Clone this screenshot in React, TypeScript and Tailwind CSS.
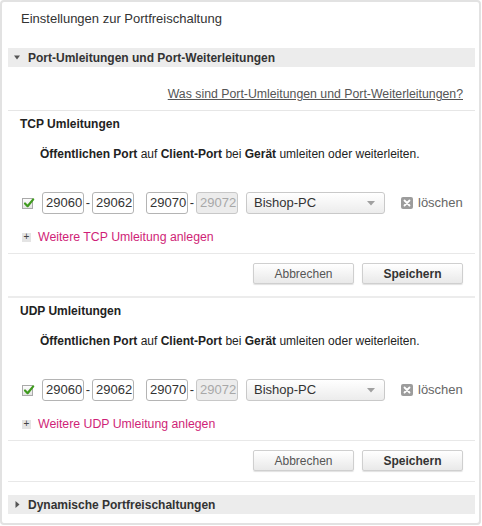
import React from "react";

function Checkbox() {
  return (
    <span className="relative flex h-[11px] w-[11px] items-center justify-center border border-[#a9a9a9] bg-gradient-to-b from-[#fdfdfd] to-[#e4e4e4]">
      <svg width="12" height="12" viewBox="0 0 12 12" className="absolute -top-[2px] left-0">
        <path d="M2 6.5 L4.6 9.2 L10.2 2.4" fill="none" stroke="#3f9a1e" strokeWidth="2.2" strokeLinecap="round" strokeLinejoin="round" />
      </svg>
    </span>
  );
}

function PortInput({ value, disabled }: { value: string; disabled?: boolean }) {
  return (
    <div
      className={
        disabled
          ? "flex h-[22px] w-[42px] items-center rounded-[3px] border border-[#c8c8c8] bg-[#ececec] pl-[3px] text-[#a8a8a8]"
          : "flex h-[22px] w-[42px] items-center rounded-[3px] border border-[#b4b4b4] bg-white pl-[3px] text-[#333]"
      }
    >
      {value}
    </div>
  );
}

function Dash() {
  return <span className="flex w-[8px] justify-center text-[#333]">-</span>;
}

function RuleRow() {
  return (
    <div className="flex h-[22px] items-center pl-[14px] text-[13px]">
      <Checkbox />
      <div className="ml-[9px] flex items-center">
        <PortInput value="29060" />
        <Dash />
        <PortInput value="29062" />
      </div>
      <div className="ml-[12px] flex items-center">
        <PortInput value="29070" />
        <Dash />
        <PortInput value="29072" disabled />
      </div>
      <div className="ml-[8px] flex h-[22px] w-[139px] items-center justify-between rounded-[3px] border border-[#c9c9c9] bg-gradient-to-b from-white to-[#ececec] pl-[7px] pr-[9px] text-[#333]">
        <span>Bishop-PC</span>
        <svg width="8" height="5" viewBox="0 0 8 5">
          <path d="M0 0 H8 L4 4.5 Z" fill="#a0a0a0" />
        </svg>
      </div>
      <div className="ml-[16px] flex items-center gap-[5px] text-[#666]">
        <span className="flex h-[12px] w-[12px] items-center justify-center rounded-[2px] bg-[#9c9c9c]">
          <svg width="8" height="8" viewBox="0 0 8 8">
            <path d="M1.5 1.5 L6.5 6.5 M6.5 1.5 L1.5 6.5" stroke="white" strokeWidth="1.8" strokeLinecap="round" />
          </svg>
        </span>
        <span>löschen</span>
      </div>
    </div>
  );
}

function AddLink({ label }: { label: string }) {
  return (
    <div className="flex h-[16px] items-center pl-[14px]">
      <span className="flex h-[9px] w-[9px] items-center justify-center bg-[#e4e4e4] text-[10px] leading-none text-[#444]">
        +
      </span>
      <span className="ml-[7px] text-[12.3px] text-[#cf1f78]">{label}</span>
    </div>
  );
}

function Buttons() {
  const base =
    "flex h-[21px] w-[101px] items-center justify-center rounded-[2px] border border-[#cfcfcf] bg-gradient-to-b from-white to-[#e9e9e9] shadow-[0_1px_1px_rgba(0,0,0,0.12)]";
  return (
    <div className="flex justify-end gap-[8px] pr-[12px]">
      <button className={base + " text-[#555]"}>Abbrechen</button>
      <button className={base + " font-bold text-[#333]"}>Speichern</button>
    </div>
  );
}

function Description() {
  return (
    <div className="flex h-[34px] items-center pl-[32px] text-[#222]">
      <span>
        <b>Öffentlichen Port</b> auf <b>Client-Port</b> bei <b>Gerät</b> umleiten oder weiterleiten.
      </span>
    </div>
  );
}

function Section({ title, addLabel }: { title: string; addLabel: string }) {
  return (
    <div>
      <div className="flex h-[26px] items-center pl-[12px] font-bold text-[#222]">{title}</div>
      <Description />
      <div className="mt-[21px]">
        <RuleRow />
      </div>
      <div className="pb-[8px] pt-[15px]">
        <AddLink label={addLabel} />
      </div>
    </div>
  );
}

export default function App() {
  return (
    <div className="h-[526px] w-[482px] bg-white font-['Liberation_Sans',Arial,sans-serif] text-[12px] leading-[16px]">
      <div className="h-[525px] w-[481px] rounded-[4px] border-2 border-[#e2e2e2] pl-[6px] pr-[4px]">
        <div className="flex h-[34px] items-center pl-[13px] text-[13px] text-[#333]">Einstellungen zur Portfreischaltung</div>

        <div className="mt-[12px] flex h-[19px] items-center bg-[#ececec] pl-[6px] font-bold text-[#333]">
          <svg width="6" height="5" viewBox="0 0 6 5" className="mr-[8px]">
            <path d="M0 0.5 H6 L3 4.5 Z" fill="#555" />
          </svg>
          Port-Umleitungen und Port-Weiterleitungen
        </div>

        <div className="flex h-[43px] items-end justify-end pb-[8px] pr-[12px]">
          <a className="text-[12.3px] text-[#555] underline">Was sind Port-Umleitungen und Port-Weiterleitungen?</a>
        </div>

        <div className="border-t border-[#e6e6e6]">
          <Section title="TCP Umleitungen" addLabel="Weitere TCP Umleitung anlegen" />
        </div>

        <div className="border-t border-[#e8e8e8] pb-[12px] pt-[9px]">
          <Buttons />
        </div>

        <div className="border-t-2 border-[#ececec]">
          <Section title="UDP Umleitungen" addLabel="Weitere UDP Umleitung anlegen" />
        </div>

        <div className="border-t border-[#e8e8e8] pb-[10px] pt-[9px]">
          <Buttons />
        </div>

        <div className="border-t border-[#e8e8e8] pt-[13px]">
          <div className="flex h-[19px] items-center bg-[#ececec] pl-[7px] font-bold text-[#333]">
            <svg width="5" height="7" viewBox="0 0 5 7" className="mr-[8px]">
              <path d="M0.5 0 V7 L4.5 3.5 Z" fill="#555" />
            </svg>
            Dynamische Portfreischaltungen
          </div>
        </div>
      </div>
    </div>
  );
}
